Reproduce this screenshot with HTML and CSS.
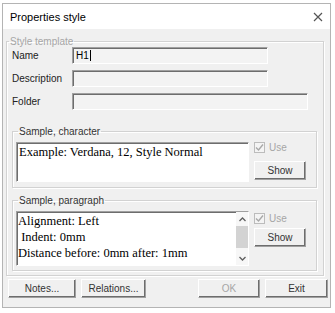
FILE: index.html
```html
<!DOCTYPE html>
<html lang="en">
<head>
    <meta charset="UTF-8">
    <title>Properties style</title>
    <link rel="stylesheet" href="styles.css">
</head>
<body>
<div class="dialog">
    <div class="titlebar">
        <span class="title">Properties style</span>
        <svg class="close" width="10" height="10" viewBox="0 0 10 10">
            <path d="M1 1 L9 9 M9 1 L1 9" stroke="#555" stroke-width="1.2" fill="none"/>
        </svg>
    </div>

    <div class="content">
        <fieldset class="group template">
            <legend class="disabled">Style template</legend>

            <div class="field-row">
                <label>Name</label>
                <div class="edit name">H1<span class="caret"></span></div>
            </div>
            <div class="field-row">
                <label>Description</label>
                <div class="edit name"></div>
            </div>
            <div class="field-row">
                <label>Folder</label>
                <div class="edit folder"></div>
            </div>

            <!-- Sample, character -->
            <fieldset class="group sample char">
                <legend>Sample, character</legend>
                <div class="sample-row">
                    <div class="preview char-preview">Example: Verdana, 12, Style Normal</div>
                    <div class="side">
                        <div class="use">
                            <span class="check">
                                <svg width="9" height="9" viewBox="0 0 9 9"><path d="M1 4.5 L3.5 7 L8 1.5" stroke="#a8a8a8" stroke-width="1.4" fill="none"/></svg>
                            </span>
                            Use
                        </div>
                        <button class="btn show">Show</button>
                    </div>
                </div>
            </fieldset>

            <!-- Sample, paragraph -->
            <fieldset class="group sample para">
                <legend>Sample, paragraph</legend>
                <div class="sample-row">
                    <div class="preview para-preview">
                        <div class="para-text">
                            <div>Alignment: Left</div>
                            <div>&nbsp;Indent: 0mm</div>
                            <div>Distance before: 0mm after: 1mm</div>
                        </div>
                        <div class="scrollbar">
                            <div class="arrow">
                                <svg width="7" height="5" viewBox="0 0 7 5"><path d="M0.5 4 L3.5 1 L6.5 4" stroke="#606060" stroke-width="1.3" fill="none"/></svg>
                            </div>
                            <div class="thumb"></div>
                            <div class="track"></div>
                            <div class="arrow">
                                <svg width="7" height="5" viewBox="0 0 7 5"><path d="M0.5 1 L3.5 4 L6.5 1" stroke="#606060" stroke-width="1.3" fill="none"/></svg>
                            </div>
                        </div>
                    </div>
                    <div class="side">
                        <div class="use">
                            <span class="check">
                                <svg width="9" height="9" viewBox="0 0 9 9"><path d="M1 4.5 L3.5 7 L8 1.5" stroke="#a8a8a8" stroke-width="1.4" fill="none"/></svg>
                            </span>
                            Use
                        </div>
                        <button class="btn show para-show">Show</button>
                    </div>
                </div>
            </fieldset>
        </fieldset>

        <div class="buttons">
            <button class="btn notes">Notes...</button>
            <button class="btn relations">Relations...</button>
            <span class="spacer"></span>
            <button class="btn ok" disabled>OK</button>
            <button class="btn exit">Exit</button>
        </div>
    </div>
</div>
</body>
</html>
```

FILE: styles.css
```css
* {
    box-sizing: border-box;
}

body {
    margin: 0;
    background-color: #fff;
    font-family: "Liberation Sans", Arial, sans-serif;
    font-size: 10px;
    color: #000;
}

/* Window */
.dialog {
    margin: 3px 0 0 2px;
    width: 329px;
    height: 305px;
    border: 1px solid #b4b4b4;
    background-color: #f0f0f0;
    display: flex;
    flex-direction: column;
}

.titlebar {
    height: 25px;
    background-color: #fff;
    display: flex;
    align-items: center;
    justify-content: space-between;
    padding: 0 7px 0 7px;
}

.titlebar .title {
    font-size: 11px;
    color: #000;
}

.content {
    padding: 7px 6px 0 3px;
}

/* Group boxes */
.group {
    margin: 0;
    padding: 0;
    border: 1px solid #d2d2d2;
    box-shadow: inset 1px 1px 0 #fff, 1px 1px 0 #fff;
    min-width: 0;
}

.group legend {
    padding: 0 1px;
    margin-left: -3px;
    line-height: 11px;
    font-size: 10px;
    color: #333;
}

.group legend.disabled {
    color: #a6a6a6;
}

.template {
    padding: 0 1px 4px 5px;
}

.field-row {
    display: flex;
    align-items: center;
    height: 17px;
}

.field-row + .field-row {
    margin-top: 6px;
}

.field-row label {
    width: 60px;
    color: #222;
}

.edit {
    height: 17px;
    background-color: #f3f3f3;
    border: 1px solid;
    border-color: #a0a0a0 #fff #fff #a0a0a0;
    box-shadow: inset 1px 1px 0 #6d6d6d;
    padding: 2px 0 0 3px;
    font-size: 10px;
    line-height: 12px;
}

.edit.name {
    width: 196px;
}

.edit.folder {
    width: 236px;
}

.caret {
    display: inline-block;
    width: 1px;
    height: 11px;
    background-color: #000;
    vertical-align: top;
    margin-left: 1px;
}

/* Sample boxes */
.sample {
    margin: 0 5px 0 0;
    padding: 5px 9px 5px 3px;
}

.char {
    margin-top: 16px;
}

.para {
    margin-top: 7px;
    padding-bottom: 4px;
}

.sample legend {
    margin-left: 2px;
}

.sample-row {
    display: flex;
    align-items: flex-start;
}

.preview {
    width: 233px;
    background-color: #fff;
    border: 1px solid;
    border-color: #a0a0a0 #fff #fff #a0a0a0;
    box-shadow: inset 1px 1px 0 #6d6d6d;
    font-family: "Liberation Serif", "Times New Roman", serif;
    font-size: 12.5px;
    line-height: 16px;
    color: #000;
}

.char-preview {
    height: 40px;
    padding: 1px 0 0 2px;
}

.para-preview {
    height: 55px;
    display: flex;
}

.para-text {
    flex: 1;
    padding: 1px 0 0 1px;
    white-space: nowrap;
    overflow: hidden;
}

.scrollbar {
    width: 12px;
    margin-right: 0;
    display: flex;
    flex-direction: column;
    background-color: #f7f7f7;
}

.scrollbar .arrow {
    height: 14px;
    display: flex;
    align-items: center;
    justify-content: center;
}

.scrollbar .thumb {
    height: 22px;
    background-color: #d3d3d3;
}

.scrollbar .track {
    flex: 1;
}

.side {
    margin-left: 5px;
    width: 52px;
}

.use {
    display: flex;
    align-items: center;
    height: 11px;
    color: #a6a6a6;
    gap: 4px;
}

.check {
    width: 11px;
    height: 11px;
    border: 1px solid #bcbcbc;
    background-color: #f4f4f4;
    display: flex;
    align-items: center;
    justify-content: center;
}

.para .use {
    margin-top: 2px;
}

/* Buttons */
.btn {
    height: 19px;
    margin: 0;
    padding: 0;
    background-color: #f0f0f0;
    border: 1px solid;
    border-color: #fff #a0a0a0 #a0a0a0 #fff;
    box-shadow: inset -1px -1px 0 #6d6d6d;
    font-family: "Liberation Sans", Arial, sans-serif;
    font-size: 10px;
    color: #333;
}

.btn:disabled {
    color: #a6a6a6;
}

.show {
    display: block;
    width: 52px;
    margin-top: 8px;
}

.para-show {
    margin-top: 4px;
}

.buttons {
    display: flex;
    margin-top: 3px;
    padding-left: 2px;
}

.notes {
    width: 68px;
}

.relations {
    width: 65px;
    margin-left: 5px;
}

.spacer {
    flex: 1;
}

.ok {
    width: 62px;
}

.exit {
    width: 63px;
    margin-left: 5px;
    margin-right: -4px;
}
```
